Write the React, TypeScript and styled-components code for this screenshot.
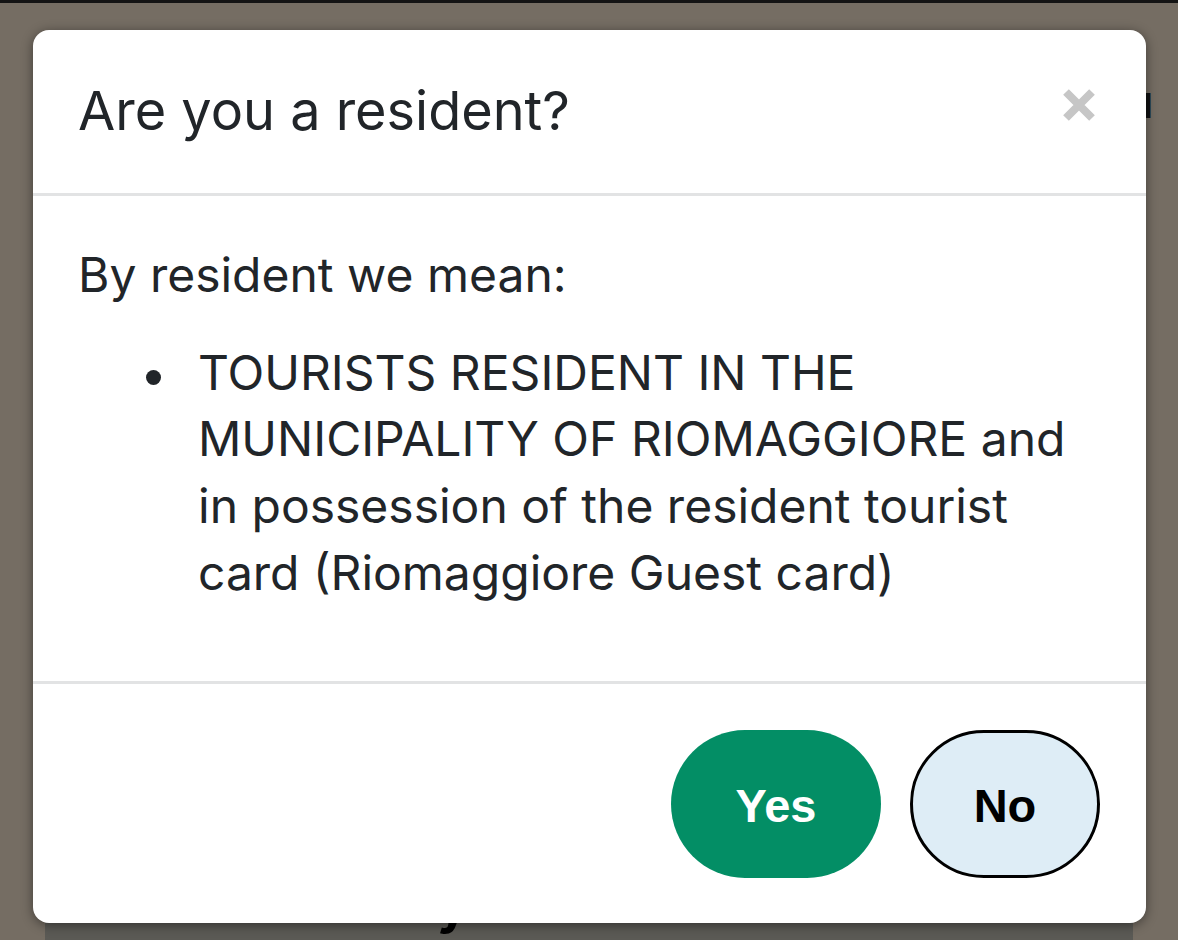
import React from 'react'
import styled, { createGlobalStyle } from 'styled-components'

const GlobalStyle = createGlobalStyle`
  html, body {
    margin: 0;
    padding: 0;
    background: #756d63;
  }
  * {
    box-sizing: border-box;
  }
`

const Page = styled.div`
  position: relative;
  width: 1178px;
  height: 940px;
  overflow: hidden;
  background: #756d63;
  border-top: 3px solid #141414;
  font-family: Inter, "Noto Sans", sans-serif;
`

const BehindCard = styled.div`
  margin: 876px 45px 0 45px;
  height: 80px;
  background: #5b5a55;
  padding-left: 392px;
  font-family: Inter, sans-serif;
  font-size: 52px;
  font-weight: 700;
  line-height: 1;
  color: #000;
`

const Glyph = styled.span`
  position: absolute;
  top: 70px;
  left: 1126px;
  font-size: 46px;
  font-weight: 500;
  color: #111;
`

const Modal = styled.div`
  position: absolute;
  top: 27px;
  left: 33px;
  width: 1113px;
  background: #fff;
  border-radius: 16px;
  box-shadow: 0 2px 12px rgba(0, 0, 0, 0.45);
  color: #212529;
  overflow: hidden;
`

const Header = styled.div`
  height: 166px;
  display: flex;
  align-items: center;
  justify-content: space-between;
  padding: 0 50px 0 45px;
  border-bottom: 3px solid #e2e3e4;
`

const Title = styled.h5`
  margin: 0;
  font-size: 54px;
  font-weight: 400;
  line-height: 1.2;
`

const CloseButton = styled.button`
  width: 34px;
  height: 34px;
  padding: 0;
  border: 0;
  background: none;
  margin-top: -14px;
  display: flex;
  cursor: pointer;
`

const Body = styled.div`
  padding: 46px 45px 30px 45px;
  font-size: 48px;
  line-height: 66.7px;
`

const Lead = styled.p`
  margin: 0 0 31px 0;
`

const List = styled.ul`
  margin: 0 0 44px 0;
  padding-left: 120px;
  list-style: none;
`

const Item = styled.li`
  position: relative;

  &::before {
    content: '';
    position: absolute;
    left: -52px;
    top: 30px;
    width: 15px;
    height: 15px;
    border-radius: 50%;
    background: #212529;
  }
`

const Footer = styled.div`
  display: flex;
  justify-content: flex-end;
  gap: 29px;
  padding: 46px 46px 45px 46px;
  border-top: 3px solid #e2e3e4;
`

const Choice = styled.button<{ $primary?: boolean }>`
  height: 148px;
  width: ${(p) => (p.$primary ? '210px' : '190px')};
  border-radius: 74px;
  border: ${(p) => (p.$primary ? '0' : '3px solid #000')};
  background: ${(p) => (p.$primary ? '#038e65' : '#deedf6')};
  color: ${(p) => (p.$primary ? '#fff' : '#000')};
  font-family: "Liberation Sans", Arial, sans-serif;
  font-weight: 700;
  font-size: 47px;
  padding-top: 4px;
  cursor: pointer;
`

const CloseIcon = () => (
  <svg width="34" height="34" viewBox="0 0 34 34">
    <path d="M4 4 L30 30 M30 4 L4 30" stroke="#c6c6c6" strokeWidth="8" strokeLinecap="butt" />
  </svg>
)

const App = () => {
  return (
    <>
      <GlobalStyle />
      <Page>
        <Glyph>u</Glyph>
        <BehindCard>y</BehindCard>
        <Modal>
          <Header>
            <Title>Are you a resident?</Title>
            <CloseButton aria-label="Close">
              <CloseIcon />
            </CloseButton>
          </Header>
          <Body>
            <Lead>By resident we mean:</Lead>
            <List>
              <Item>
                TOURISTS RESIDENT IN THE MUNICIPALITY OF RIOMAGGIORE and in possession of the resident
                tourist card (Riomaggiore Guest card)
              </Item>
            </List>
          </Body>
          <Footer>
            <Choice $primary>Yes</Choice>
            <Choice>No</Choice>
          </Footer>
        </Modal>
      </Page>
    </>
  )
}

export default App
